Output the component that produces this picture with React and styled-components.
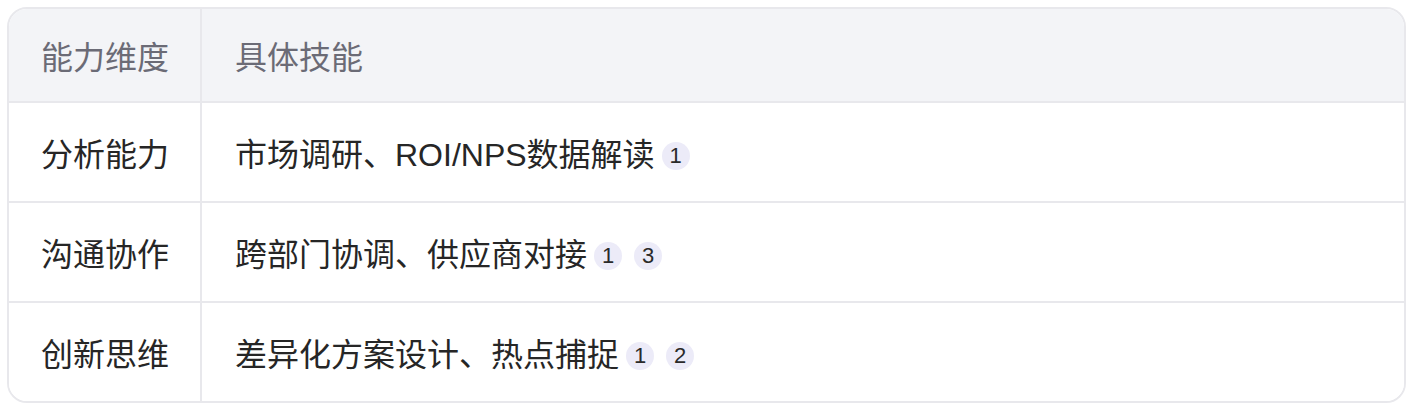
import React from 'react';
import styled, { createGlobalStyle } from 'styled-components';

const GlobalStyle = createGlobalStyle`
    body {
        margin: 0;
        background: #ffffff;
        font-family: "Liberation Sans", "Noto Sans CJK SC", sans-serif;
    }
`

const Page = styled.div`
    padding: 7px 10px 16px 7px;
`

const Table = styled.div`
    display: grid;
    grid-template-columns: 193px 1fr;
    border: 2px solid #e8e8ec;
    border-radius: 20px;
    overflow: hidden;
`

const Cell = styled.div`
    display: flex;
    align-items: center;
    height: ${props => props.header ? '92px' : '98px'};
    font-size: 32px;
    color: ${props => props.header ? '#6b6b76' : '#262626'};
    background: ${props => props.header ? '#f3f4f7' : '#ffffff'};
    border-right: ${props => props.first ? '2px solid #e8e8ec' : 'none'};
    border-bottom: ${props => props.last ? 'none' : '2px solid #e8e8ec'};
    padding: 0 32px 0 ${props => props.first ? '32px' : '33px'};
    white-space: nowrap;
`

const Badges = styled.span`
    display: inline-flex;
    gap: 12px;
    margin-left: 7px;
    transform: translateY(4px);
`

const Badge = styled.span`
    display: inline-flex;
    align-items: center;
    justify-content: center;
    width: 28px;
    height: 28px;
    border-radius: 50%;
    background: #ecebf8;
    color: #2a2a2a;
    font-size: 22px;
`

const rows = [
    { dim: '分析能力', skill: '市场调研、ROI/NPS数据解读', refs: [1] },
    { dim: '沟通协作', skill: '跨部门协调、供应商对接', refs: [1, 3] },
    { dim: '创新思维', skill: '差异化方案设计、热点捕捉', refs: [1, 2] },
]

export default function App() {
    return (
        <Page>
            <GlobalStyle />
            <Table>
                <Cell header first>能力维度</Cell>
                <Cell header>具体技能</Cell>
                {rows.map((row, i) => (
                    <React.Fragment key={row.dim}>
                        <Cell first last={i === rows.length - 1}>{row.dim}</Cell>
                        <Cell last={i === rows.length - 1}>
                            {row.skill}
                            <Badges>
                                {row.refs.map(r => <Badge key={r}>{r}</Badge>)}
                            </Badges>
                        </Cell>
                    </React.Fragment>
                ))}
            </Table>
        </Page>
    )
}
